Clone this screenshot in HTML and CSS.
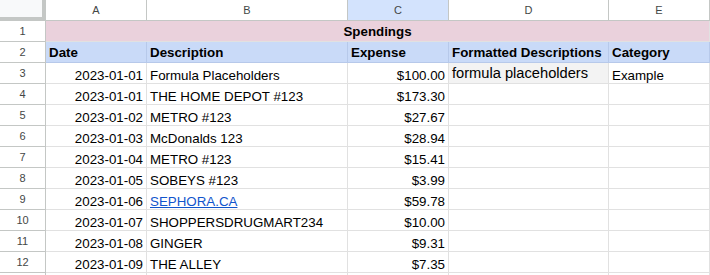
FILE: index.html
```html
<!DOCTYPE html>
<html lang="en">
<head>
  <meta charset="UTF-8" />
  <title>Spendings</title>
  <link rel="stylesheet" href="styles.css">
</head>
<body>

  <div class="sheet">
    <!-- column headers -->
    <div class="corner"></div>
    <div class="colhead">A</div>
    <div class="colhead">B</div>
    <div class="colhead selected">C</div>
    <div class="colhead">D</div>
    <div class="colhead">E</div>

    <!-- row 1 -->
    <div class="rowhead">1</div>
    <div class="cell title">Spendings</div>

    <!-- row 2 -->
    <div class="rowhead">2</div>
    <div class="cell head">Date</div>
    <div class="cell head">Description</div>
    <div class="cell head">Expense</div>
    <div class="cell head">Formatted Descriptions</div>
    <div class="cell head">Category</div>

    <!-- row 3 -->
    <div class="rowhead">3</div>
    <div class="cell num">2023-01-01</div>
    <div class="cell">Formula Placeholders</div>
    <div class="cell num">$100.00</div>
    <div class="cell formula">formula placeholders</div>
    <div class="cell">Example</div>

    <div class="rowhead">4</div>
    <div class="cell num">2023-01-01</div>
    <div class="cell">THE HOME DEPOT #123</div>
    <div class="cell num">$173.30</div>
    <div class="cell"></div>
    <div class="cell"></div>

    <div class="rowhead">5</div>
    <div class="cell num">2023-01-02</div>
    <div class="cell">METRO #123</div>
    <div class="cell num">$27.67</div>
    <div class="cell"></div>
    <div class="cell"></div>

    <div class="rowhead">6</div>
    <div class="cell num">2023-01-03</div>
    <div class="cell">McDonalds 123</div>
    <div class="cell num">$28.94</div>
    <div class="cell"></div>
    <div class="cell"></div>

    <div class="rowhead">7</div>
    <div class="cell num">2023-01-04</div>
    <div class="cell">METRO #123</div>
    <div class="cell num">$15.41</div>
    <div class="cell"></div>
    <div class="cell"></div>

    <div class="rowhead">8</div>
    <div class="cell num">2023-01-05</div>
    <div class="cell">SOBEYS #123</div>
    <div class="cell num">$3.99</div>
    <div class="cell"></div>
    <div class="cell"></div>

    <div class="rowhead">9</div>
    <div class="cell num">2023-01-06</div>
    <div class="cell"><a class="link" href="#">SEPHORA.CA</a></div>
    <div class="cell num">$59.78</div>
    <div class="cell"></div>
    <div class="cell"></div>

    <div class="rowhead">10</div>
    <div class="cell num">2023-01-07</div>
    <div class="cell">SHOPPERSDRUGMART234</div>
    <div class="cell num">$10.00</div>
    <div class="cell"></div>
    <div class="cell"></div>

    <div class="rowhead">11</div>
    <div class="cell num">2023-01-08</div>
    <div class="cell">GINGER</div>
    <div class="cell num">$9.31</div>
    <div class="cell"></div>
    <div class="cell"></div>

    <div class="rowhead">12</div>
    <div class="cell num">2023-01-09</div>
    <div class="cell">THE ALLEY</div>
    <div class="cell num">$7.35</div>
    <div class="cell"></div>
    <div class="cell"></div>

    <!-- row 13, only its top edge is in view -->
    <div class="rowhead"></div>
    <div class="cell"></div>
    <div class="cell"></div>
    <div class="cell"></div>
    <div class="cell"></div>
    <div class="cell"></div>
  </div>

</body>
</html>
```

FILE: styles.css
```css
:root {
  --grid: #e1e1e1;
  --head-line: #c4c7c5;
  --head-text: #444746;
  --pink: #ead1dc;
  --blue: #c9daf8;
  --selected: #d3e3fd;
}

* {
  box-sizing: border-box;
  margin: 0;
  padding: 0;
}

body {
  font-family: "Liberation Sans", Arial, sans-serif;
  background-color: #fff;
  color: #000;
  height: 275px;
  overflow: hidden;
}

.sheet {
  display: grid;
  grid-template-columns: 46px 101px 201px 101px 160px 101px;
  grid-auto-rows: 21px;
  width: 710px;
}

.corner {
  background-color: #f8f9fa;
  border-right: 4px solid var(--head-line);
  border-bottom: 4px solid var(--head-line);
}

.colhead,
.rowhead {
  display: flex;
  align-items: center;
  justify-content: center;
  font-size: 11px;
  color: var(--head-text);
  border-right: 1px solid var(--head-line);
  border-bottom: 1px solid var(--head-line);
}

.colhead.selected {
  background-color: var(--selected);
}

.cell {
  display: flex;
  align-items: flex-end;
  padding: 0 3px;
  font-size: 13.33px;
  line-height: 14px;
  white-space: nowrap;
  overflow: hidden;
  border-right: 1px solid var(--grid);
  border-bottom: 1px solid var(--grid);
}

.title,
.head {
  align-items: center;
  padding-top: 2px;
  line-height: 16px;
  font-weight: bold;
}

.title {
  grid-column: span 5;
  justify-content: center;
  background-color: var(--pink);
}

.head {
  background-color: var(--blue);
  border-color: #b7c9ea;
}

.num {
  justify-content: flex-end;
}

.formula {
  align-items: flex-start;
  padding-top: 2px;
  font-size: 14.67px;
  line-height: 17px;
  background-color: #f3f3f3;
}

.link {
  color: #1155cc;
  text-decoration: underline;
}
```
